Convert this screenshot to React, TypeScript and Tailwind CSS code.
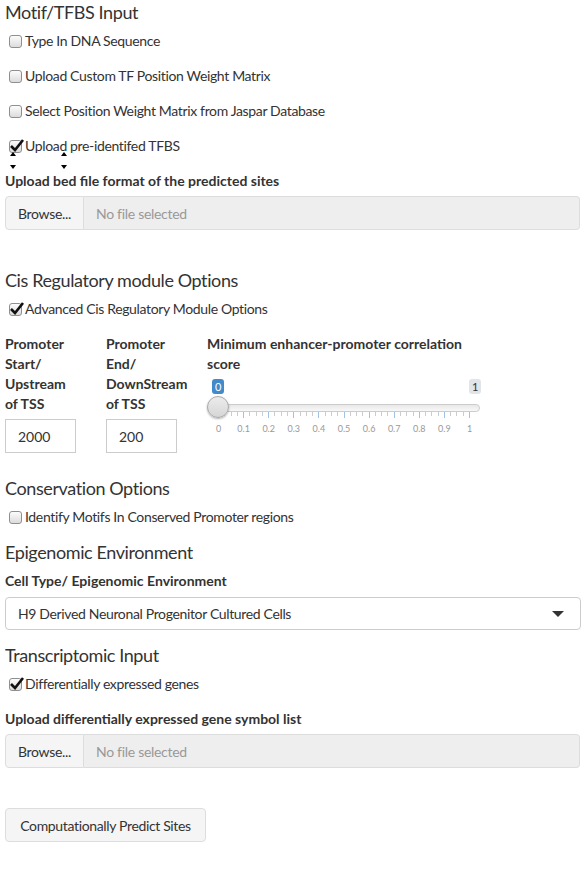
import React from "react";

const font = { fontFamily: "Lato, 'Noto Sans', sans-serif" };

function Box({ checked }: { checked?: boolean }) {
  return (
    <span className="relative inline-block w-[13px] h-[13px] mr-[3px] ml-[4px] shrink-0">
      <span className="absolute inset-0 rounded-[3px] border border-[#8f8f8f] bg-gradient-to-b from-[#fcfcfc] to-[#dcdcdc]" />
      {checked && (
        <svg className="absolute left-[0px] top-[-2px]" width="16" height="15" viewBox="0 0 16 15">
          <path d="M2 8 L6 12 L14 2" fill="none" stroke="#111" strokeWidth="2.6" strokeLinejoin="miter" />
        </svg>
      )}
    </span>
  );
}

function Check({ label, checked, className = "" }: { label: string; checked?: boolean; className?: string }) {
  return (
    <div className={"flex items-center h-[20px] text-[14px] tracking-[-0.35px] text-[#333] " + className}>
      <Box checked={checked} />
      <span className="-translate-y-[1px]">{label}</span>
    </div>
  );
}

function H({ children, className = "" }: { children: React.ReactNode; className?: string }) {
  return (
    <div className={"h-[24px] leading-[24px] text-[18px] tracking-[-0.4px] text-[#333] " + className}>
      {children}
    </div>
  );
}

function Label({ children, className = "" }: { children: React.ReactNode; className?: string }) {
  return <div className={"leading-[20px] text-[14px] font-bold text-[#333] " + className}>{children}</div>;
}

function FileInput({ className = "" }: { className?: string }) {
  return (
    <div className={"flex h-[34px] w-[575px] " + className}>
      <div className="w-[79px] h-full flex items-center justify-center bg-[#f5f5f5] border border-[#ddd] rounded-l-[4px] text-[14px] tracking-[-0.3px] text-[#333]">
        Browse...
      </div>
      <div className="flex-1 h-full flex items-center pl-[12px] bg-[#eeeeee] border border-l-0 border-[#ddd] rounded-r-[4px] text-[14px] tracking-[-0.3px] text-[#999]">
        No file selected
      </div>
    </div>
  );
}

function Slider() {
  const ticks: React.ReactNode[] = [];
  for (let i = 0; i <= 40; i++) {
    const x = 11 + i * 6.275;
    const major = i % 4 === 0;
    ticks.push(
      <div
        key={i}
        className={major ? "absolute top-[38px] w-px h-[6px] bg-[#9fc3e4]" : "absolute top-[38px] w-px h-[4px] bg-[#ccc]"}
        style={{ left: Math.round(x) }}
      />
    );
  }
  const labels = ["0", "0.1", "0.2", "0.3", "0.4", "0.5", "0.6", "0.7", "0.8", "0.9", "1"];
  return (
    <div className="relative h-[79px] w-[273px]">
      <div className="absolute left-[5px] top-[5px] h-[15px] px-[3px] rounded-[3px] bg-[#428bca] text-white text-[11px] leading-[15px]">0</div>
      <div className="absolute left-[262px] top-[5px] h-[15px] px-[3px] rounded-[3px] bg-[#e1e4e9] text-[#333] text-[11px] leading-[15px]">1</div>
      <div className="absolute left-[0px] top-[30px] w-[273px] h-[8px] rounded-full border border-[#ccc] bg-gradient-to-b from-[#e8e8e8] to-[#f8f8f8]" />
      {ticks}
      {labels.map((l, i) => (
        <div
          key={l}
          className="absolute top-[49px] text-[9px] leading-[12px] text-[#999] -translate-x-1/2"
          style={{ left: 11.5 + i * 25.1 }}
        >
          {l}
        </div>
      ))}
      <div className="absolute left-[0px] top-[22px] w-[22px] h-[22px] rounded-full border border-[#aaa] bg-gradient-to-b from-[#ececec] to-[#d6d6d6] shadow-[0_1px_2px_rgba(0,0,0,0.3)]" />
    </div>
  );
}

function Tri({ up }: { up?: boolean }) {
  return (
    <div
      className={
        up
          ? "w-0 h-0 border-l-[3px] border-r-[3px] border-b-[4px] border-l-transparent border-r-transparent border-b-black"
          : "w-0 h-0 border-l-[3px] border-r-[3px] border-t-[4px] border-l-transparent border-r-transparent border-t-black"
      }
    />
  );
}

export default function App() {
  return (
    <div className="w-[588px] min-h-[872px] bg-white" style={font}>
      <div className="ml-[5px] w-[575px] flex flex-col">
        <H>Motif/TFBS Input</H>
        <Check className="mt-[7px]" label="Type In DNA Sequence" />
        <Check className="mt-[15px]" label="Upload Custom TF Position Weight Matrix" />
        <Check className="mt-[15px]" label="Select Position Weight Matrix from Jaspar Database" />
        <Check className="mt-[15px]" label="Upload pre-identifed TFBS" checked />
        <div className="relative h-[15px] z-10">
          <div className="absolute left-[5px] top-[-4px]"><Tri up /></div>
          <div className="absolute left-[56px] top-[-4px]"><Tri up /></div>
          <div className="absolute left-[5px] top-[9px]"><Tri /></div>
          <div className="absolute left-[56px] top-[9px]"><Tri /></div>
        </div>
        <Label className="h-[20px]">Upload bed file format of the predicted sites</Label>
        <FileInput className="mt-[5px]" />

        <H className="mt-[38px]">Cis Regulatory module Options</H>
        <Check className="mt-[7px]" label="Advanced Cis Regulatory Module Options" checked />

        <div className="flex mt-[15px]">
          <div className="w-[101px] flex flex-col">
            <Label>
              Promoter
              <br />
              Start/
              <br />
              Upstream
              <br />
              of TSS
            </Label>
            <div className="mt-[5px] w-[71px] h-[34px] border border-[#ccc] flex items-center pl-[12px] text-[14px] text-[#333]">2000</div>
          </div>
          <div className="w-[101px] flex flex-col">
            <Label>
              Promoter
              <br />
              End/
              <br />
              DownStream
              <br />
              of TSS
            </Label>
            <div className="mt-[5px] w-[71px] h-[34px] border border-[#ccc] flex items-center pl-[12px] text-[14px] text-[#333]">200</div>
          </div>
          <div className="flex flex-col">
            <Label>
              Minimum enhancer-promoter correlation
              <br />
              score
            </Label>
            <Slider />
          </div>
        </div>

        <H className="mt-[23px]">Conservation Options</H>
        <Check className="mt-[7px]" label="Identify Motifs In Conserved Promoter regions" />

        <H className="mt-[13px]">Epigenomic Environment</H>
        <Label className="mt-[7px] h-[20px]">Cell Type/ Epigenomic Environment</Label>
        <div className="mt-[6px] w-[576px] h-[33px] border border-[#ccc] rounded-[4px] flex items-center justify-between pl-[12px] pr-[16px] text-[14px] tracking-[-0.35px] text-[#333]">
          <span>H9 Derived Neuronal Progenitor Cultured Cells</span>
          <span className="w-0 h-0 border-l-[6px] border-r-[6px] border-t-[6px] border-l-transparent border-r-transparent border-t-[#333]" />
        </div>

        <H className="mt-[13px]">Transcriptomic Input</H>
        <Check className="mt-[7px]" label="Differentially expressed genes" checked />
        <Label className="mt-[15px] h-[20px]">Upload differentially expressed gene symbol list</Label>
        <FileInput className="mt-[5px]" />

        <div className="mt-[40px] w-[201px] h-[34px] bg-[#f5f5f5] border border-[#ddd] rounded-[4px] flex items-center justify-center text-[14px] tracking-[-0.35px] text-[#333]">
          Computationally Predict Sites
        </div>
      </div>
    </div>
  );
}
